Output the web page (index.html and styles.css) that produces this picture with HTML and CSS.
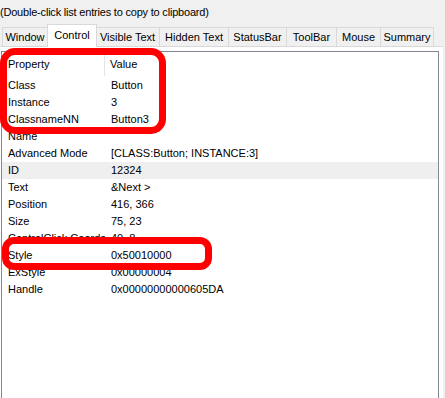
FILE: index.html
```html
<!DOCTYPE html>
<html>
<head>
<meta charset="utf-8">
<link rel="stylesheet" href="styles.css">
</head>
<body>
<div class="caption">(Double-click list entries to copy to clipboard)</div>
<div class="tabs">
  <div class="tab t1">Window</div>
  <div class="tab t2 active">Control</div>
  <div class="tab t3">Visible Text</div>
  <div class="tab t4">Hidden Text</div>
  <div class="tab t5">StatusBar</div>
  <div class="tab t6">ToolBar</div>
  <div class="tab t7">Mouse</div>
  <div class="tab t8">Summary</div>
</div>
<div class="panel">
  <div class="list">
    <div class="head">
      <div class="hcell hprop">Property</div>
      <div class="hcell hval">Value</div>
    </div>
    <div class="row"><div class="k">Class</div><div class="v">Button</div></div>
    <div class="row"><div class="k">Instance</div><div class="v">3</div></div>
    <div class="row"><div class="k">ClassnameNN</div><div class="v">Button3</div></div>
    <div class="row"><div class="k">Name</div><div class="v"></div></div>
    <div class="row"><div class="k">Advanced Mode</div><div class="v">[CLASS:Button; INSTANCE:3]</div></div>
    <div class="row sel"><div class="k">ID</div><div class="v">12324</div></div>
    <div class="row"><div class="k">Text</div><div class="v">&amp;Next &gt;</div></div>
    <div class="row"><div class="k">Position</div><div class="v">416, 366</div></div>
    <div class="row"><div class="k">Size</div><div class="v">75, 23</div></div>
    <div class="row"><div class="k">ControlClick Coords</div><div class="v">40, 8</div></div>
    <div class="row"><div class="k">Style</div><div class="v">0x50010000</div></div>
    <div class="row"><div class="k">ExStyle</div><div class="v">0x00000004</div></div>
    <div class="row"><div class="k">Handle</div><div class="v">0x00000000000605DA</div></div>
  </div>
</div>
<div class="mark mark1"></div>
<div class="mark mark2"></div>
</body>
</html>
```

FILE: styles.css
```css
html, body {
  margin: 0;
  padding: 0;
  height: 100%;
  overflow: hidden;
}
body {
  background: #f0f0f0;
  font-family: "Liberation Sans", Arial, sans-serif;
  font-size: 11px;
  color: #000;
  position: relative;
}
.caption {
  height: 24px;
  line-height: 24px;
  padding-left: 0;
  letter-spacing: -0.2px;
  white-space: nowrap;
}
.tabs {
  display: flex;
  align-items: flex-end;
  height: 22px;
  padding-left: 2px;
}
.tab {
  height: 19px;
  line-height: 18px;
  box-sizing: border-box;
  border: 1px solid #d9d9d9;
  border-bottom: none;
  border-left: none;
  background: #f0f0f0;
  text-align: center;
  white-space: nowrap;
}
.tab.t1 { border-left: 1px solid #d9d9d9; width: 46px; }
.tab.t2 { width: 48px; }
.tab.t3 { width: 64px; }
.tab.t4 { width: 69px; }
.tab.t5 { width: 58px; }
.tab.t6 { width: 50px; }
.tab.t7 { width: 44px; }
.tab.t8 { width: 53px; }
.tab.active {
  height: 23px;
  line-height: 20px;
  background: #fff;
  border: 1px solid #d9d9d9;
  border-bottom: none;
  margin-bottom: -1px;
  position: relative;
  z-index: 1;
  margin-left: -1px;
  margin-right: -1px;
  width: 50px;
}
.panel {
  background: #fff;
  border-top: 1px solid #d9d9d9;
  padding: 4px 0 0 1px;
  height: 352px;
  width: 443px;
  box-sizing: border-box;
}
.list {
  width: 438px;
  height: 347px;
  box-sizing: border-box;
  border: 1px solid #828790;
  border-bottom: none;
  background: #fff;
}
.head {
  display: flex;
  height: 25px;
  align-items: center;
}
.hcell {
  height: 23px;
  line-height: 22px;
}
.hprop {
  width: 103px;
  box-sizing: border-box;
  padding-left: 6px;
  border-right: 1px solid #e5e5e5;
  margin-top: -1px;
}
.hval {
  padding-left: 5px;
  margin-top: -1px;
}
.row {
  display: grid;
  grid-template-columns: 103px 1fr;
  height: 17px;
  line-height: 17px;
  white-space: nowrap;
}
.row.sel {
  background: #efefef;
}
.k {
  padding-left: 6px;
  overflow: hidden;
}
.v {
  padding-left: 6px;
}
.mark {
  position: absolute;
  box-sizing: border-box;
  border: 7px solid #ff0000;
  z-index: 5;
}
.mark1 {
  left: 0;
  top: 48px;
  width: 166px;
  height: 86px;
  border-radius: 15px;
}
.mark2 {
  left: 2px;
  top: 237px;
  width: 210px;
  height: 33px;
  border-radius: 12px;
}
```
